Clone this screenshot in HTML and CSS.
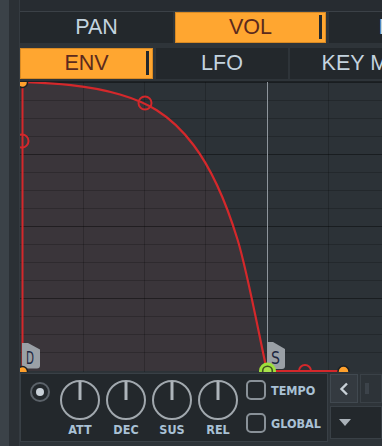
FILE: index.html
```html
<!DOCTYPE html>
<html lang="en">
<head>
    <meta charset="UTF-8">
    <meta name="viewport" content="width=device-width, initial-scale=1.0">
    <title>Envelope</title>
    <link rel="stylesheet" href="styles.css">
</head>
<body>
    <div class="rail"></div>
    <div class="gutter"></div>

    <div class="main">
        <div class="topbar"></div>

        <div class="tabs">
            <div class="tab tab-pan">PAN</div>
            <div class="tab tab-vol active">VOL</div>
            <div class="tab tab-mod">MOD X</div>
        </div>

        <div class="tabs tabs-sub">
            <div class="tab tab-env active">ENV</div>
            <div class="tab tab-lfo">LFO</div>
            <div class="tab tab-key">KEY MAPPING</div>
        </div>

        <div class="graph">
            <svg width="362" height="290" viewBox="0 0 362 290">
                <rect x="1" y="0" width="361" height="290" fill="#2c3237"/>
                <!-- area under the envelope -->
                <path d="M2 0C34.7 1.3 67.3 2.8 100 12.5C124.5 19.7 149 30.5 173.5 63C188.2 82.5 202.9 109.8 217.6 157.7C227.4 189.6 240 258 247 289L2 289Z" fill="#3a353a"/>
                <!-- grid -->
                <path d="M63.5 0V290M124.5 0V290M185.5 0V290M308.5 0V290M0 18.5H362M0 36.5H362M0 54.5H362M0 90.5H362M0 108.5H362M0 126.5H362M0 162.5H362M0 180.5H362M0 198.5H362M0 234.5H362M0 252.5H362M0 270.5H362" stroke="rgba(0,0,0,0.2)" stroke-width="1"/>
                <path d="M0 72.5H362M0 144.5H362M0 216.5H362M0 0.5H362" stroke="rgba(0,0,0,0.42)" stroke-width="1"/>
                <!-- play position -->
                <path d="M247.5 0V290" stroke="#8e959c" stroke-width="1"/>
                <!-- envelope -->
                <path d="M2 0C34.7 1.3 67.3 2.8 100 12.5C124.5 19.7 149 30.5 173.5 63C188.2 82.5 202.9 109.8 217.6 157.7C227.4 189.6 240 258 247 289" fill="none" stroke="#d4282b" stroke-width="2.2"/>
                <path d="M2.5 0V289M247 289H323" stroke="#d4282b" stroke-width="2"/>
                <!-- tension handles -->
                <circle cx="2" cy="59" r="6.5" fill="none" stroke="#d4282b" stroke-width="2"/>
                <circle cx="125" cy="21" r="6.5" fill="none" stroke="#d4282b" stroke-width="2"/>
                <circle cx="285" cy="289" r="6" fill="none" stroke="#d4282b" stroke-width="2"/>
                <!-- markers -->
                <path d="M2 261H8L20 267.5V283.5Q20 286.5 17 286.5H2Z" fill="#9aa0a6"/>
                <text class="marker" x="10" y="282" text-anchor="middle" textLength="8" lengthAdjust="spacingAndGlyphs">D</text>
                <path d="M247 260H253L265 267V284Q265 287 262 287H247Z" fill="#9aa0a6"/>
                <text class="marker" x="255.5" y="282" text-anchor="middle" textLength="9" lengthAdjust="spacingAndGlyphs">S</text>
                <!-- points -->
                <circle cx="2.5" cy="0.5" r="5" fill="#ffa02c" stroke="#1c2024" stroke-width="1.5"/>
                <circle cx="2.5" cy="289.5" r="5" fill="#ffa02c" stroke="#1c2024" stroke-width="1.5"/>
                <circle cx="323.5" cy="289.5" r="5.5" fill="#ffa02c" stroke="#1c2024" stroke-width="1.5"/>
                <circle cx="247.5" cy="289" r="8.5" fill="#9de03c"/>
                <circle cx="247.5" cy="289" r="4.8" fill="#a9e24c" stroke="#3f5220" stroke-width="1.6"/>
            </svg>
        </div>

        <div class="bottom">
            <div class="env-panel">
                <span class="radio"></span>
                <div class="knobs">
                    <div class="knob">
                        <svg width="40" height="40" viewBox="0 0 40 40"><circle cx="20" cy="20" r="19" fill="none" stroke="#a1a8ae" stroke-width="2"/><path d="M20 1.5V20" stroke="#aeb5bb" stroke-width="3"/></svg>
                        <span class="knob-label">ATT</span>
                    </div>
                    <div class="knob">
                        <svg width="40" height="40" viewBox="0 0 40 40"><circle cx="20" cy="20" r="19" fill="none" stroke="#a1a8ae" stroke-width="2"/><path d="M20 1.5V20" stroke="#aeb5bb" stroke-width="3"/></svg>
                        <span class="knob-label">DEC</span>
                    </div>
                    <div class="knob">
                        <svg width="40" height="40" viewBox="0 0 40 40"><circle cx="20" cy="20" r="19" fill="none" stroke="#a1a8ae" stroke-width="2"/><path d="M20 1.5V20" stroke="#aeb5bb" stroke-width="3"/></svg>
                        <span class="knob-label">SUS</span>
                    </div>
                    <div class="knob">
                        <svg width="40" height="40" viewBox="0 0 40 40"><circle cx="20" cy="20" r="19" fill="none" stroke="#a1a8ae" stroke-width="2"/><path d="M20 1.5V20" stroke="#aeb5bb" stroke-width="3"/></svg>
                        <span class="knob-label">REL</span>
                    </div>
                </div>
                <div class="checks">
                    <div class="check"><span class="box"></span>TEMPO</div>
                    <div class="check"><span class="box"></span>GLOBAL</div>
                </div>
            </div>

            <div class="side">
                <div class="side-row">
                    <div class="btn-prev">
                        <svg width="10" height="14" viewBox="0 0 10 14"><path d="M8 1.5L2.5 7L8 12.5" fill="none" stroke="#c9d1d8" stroke-width="2.4"/></svg>
                    </div>
                    <div class="btn-next"><span class="grip"></span></div>
                </div>
                <div class="dropdown"><span class="arrow"></span></div>
            </div>
        </div>
    </div>
</body>
</html>
```

FILE: styles.css
```css
body {
    margin: 0;
    height: 446px;
    display: flex;
    overflow: hidden;
    background-color: #2b3035;
    font-family: "Liberation Sans", Arial, sans-serif;
}
.rail {
    width: 9px;
    flex-shrink: 0;
    background-color: #3b4248;
}
.gutter {
    width: 10px;
    flex-shrink: 0;
    background-color: #2b3035;
    border-right: 1px solid #353b41;
}
.main {
    flex: 1;
    min-width: 0;
    display: flex;
    flex-direction: column;
    overflow: hidden;
    background-color: #2e3439;
}
.topbar {
    height: 11px;
    flex-shrink: 0;
    background-color: #272c31;
    border-bottom: 1px solid #3b4147;
}
.tabs {
    display: flex;
    height: 31px;
    flex-shrink: 0;
}
.tabs-sub {
    margin-top: 5px;
}
.tab {
    position: relative;
    flex-shrink: 0;
    display: flex;
    align-items: center;
    justify-content: center;
    box-sizing: border-box;
    background-color: #23282c;
    color: #c3d3df;
    font-size: 21.5px;
    white-space: nowrap;
    overflow: hidden;
}
.tab.active {
    background-color: #ffa630;
    color: #5c2a1d;
    border: 1px solid #d98a24;
}
.tab.active::after {
    content: "";
    position: absolute;
    right: 3px;
    top: 2px;
    bottom: 3px;
    width: 3px;
    background-color: #23282c;
}
.tab-pan { width: 153px; }
.tab-vol { width: 151px; margin-left: 2px; }
.tab-mod { width: 170px; margin-left: 3px; }
.tab-env { width: 133px; }
.tab-lfo { width: 132px; margin-left: 3px; }
.tab-key { width: 211px; margin-left: 2px; }

.graph {
    height: 290px;
    flex-shrink: 0;
    margin-top: 2px;
    border-top: 1px solid #1d2124;
}
.graph svg {
    display: block;
}
.marker {
    font-family: "DejaVu Sans Condensed", "DejaVu Sans", sans-serif;
    font-stretch: condensed;
    font-size: 18px;
    fill: #1d2640;
}

.bottom {
    display: flex;
    height: 69px;
    flex-shrink: 0;
    margin-top: 1px;
}
.env-panel {
    width: 308px;
    box-sizing: border-box;
    display: flex;
    align-items: flex-start;
    padding: 6px 0 0 9px;
    background-color: #23282c;
    border: 1px solid #394046;
}
.radio {
    width: 20px;
    height: 20px;
    margin-top: 2px;
    box-sizing: border-box;
    border: 2px solid #5b6269;
    border-radius: 50%;
    display: flex;
    align-items: center;
    justify-content: center;
}
.radio::after {
    content: "";
    width: 8px;
    height: 8px;
    border-radius: 50%;
    background-color: #c8d0d7;
}
.knobs {
    display: flex;
    gap: 6px;
    margin-left: 10px;
}
.knob {
    width: 40px;
    display: flex;
    flex-direction: column;
    align-items: center;
}
.knob svg {
    display: block;
}
.knob-label,
.check {
    font-family: "DejaVu Sans Condensed", "DejaVu Sans", sans-serif;
    font-stretch: condensed;
    font-weight: bold;
    font-size: 12.5px;
    color: #a9c1d5;
}
.knob-label {
    margin-top: 3px;
    line-height: 14px;
}
.checks {
    display: flex;
    flex-direction: column;
    gap: 13px;
    margin-left: 8px;
}
.check {
    display: flex;
    align-items: center;
    gap: 5px;
    height: 20px;
}
.box {
    width: 20px;
    height: 20px;
    box-sizing: border-box;
    border: 2px solid #899198;
    border-radius: 5px;
}

.side {
    flex: 1;
    display: flex;
    flex-direction: column;
    gap: 3px;
    padding: 1px 0 0 2px;
}
.side-row {
    display: flex;
    gap: 2px;
    height: 29px;
}
.btn-prev {
    width: 28px;
    box-sizing: border-box;
    display: flex;
    align-items: center;
    justify-content: center;
    background-color: #343a40;
    border: 1px solid #414950;
}
.btn-next {
    flex: 1;
    box-sizing: border-box;
    background-color: #2d3338;
    border: 1px solid #3a4147;
}
.grip {
    display: block;
    width: 4px;
    height: 11px;
    margin: 8px 0 0 4px;
    background-color: #3c434a;
}
.dropdown {
    height: 33px;
    box-sizing: border-box;
    display: flex;
    align-items: center;
    padding-left: 8px;
    background-color: #23282c;
    border: 1px solid #394046;
}
.arrow {
    width: 0;
    height: 0;
    border-left: 6px solid transparent;
    border-right: 6px solid transparent;
    border-top: 7px solid #aab2b9;
}
```
